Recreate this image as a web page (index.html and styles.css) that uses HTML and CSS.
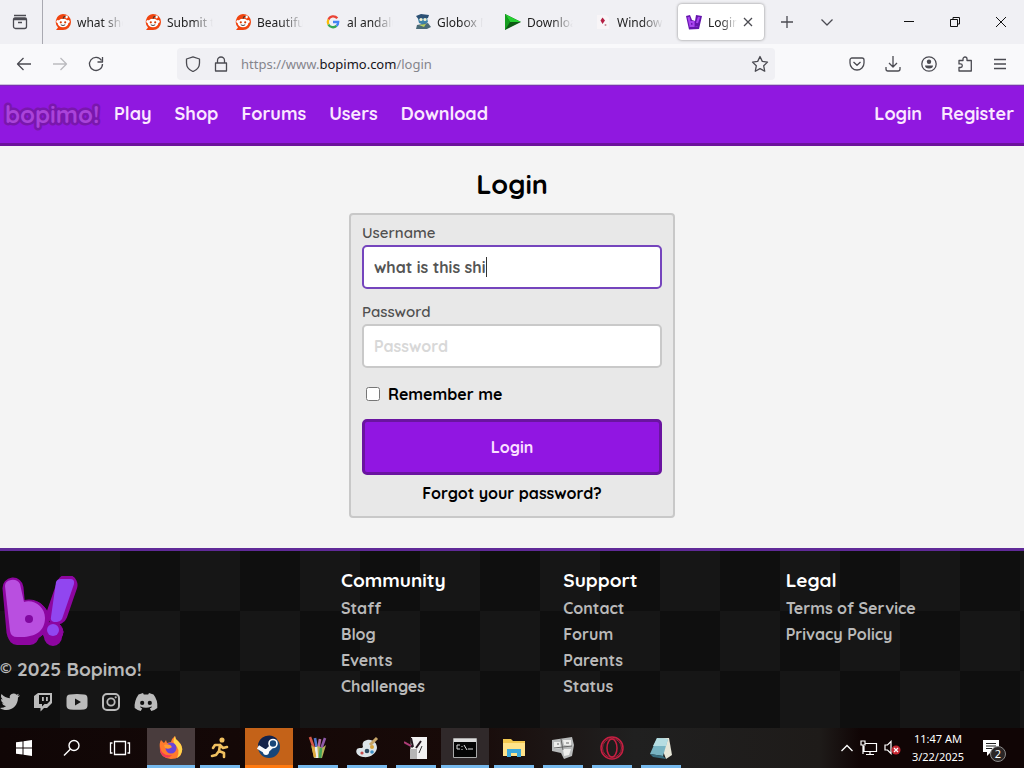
FILE: index.html
```html
<!DOCTYPE html>
<html lang="en">
<head>
<meta charset="utf-8">
<meta name="viewport" content="width=device-width, initial-scale=1">
<title>Login - Bopimo!</title>
<link rel="stylesheet" href="styles.css">
</head>
<body>
<svg class="defs" width="0" height="0" aria-hidden="true">
  <symbol id="reddit" viewBox="0 0 16 16">
    <path d="M8 0a8 8 0 1 1 0 16H1l2-2.500A8 8 0 0 1 8 0z" fill="#f0440f"/>
    <circle cx="11.500" cy="3" r="1.400" fill="#fff"/><circle cx="2.800" cy="7.500" r="1.500" fill="#fff"/><circle cx="13.200" cy="7.500" r="1.500" fill="#fff"/>
    <ellipse cx="8" cy="9" rx="5.400" ry="4.200" fill="#fff"/>
    <circle cx="5.800" cy="8.300" r="1.100" fill="#d93a00"/><circle cx="10.200" cy="8.300" r="1.100" fill="#d93a00"/>
    <path d="M5.800 10.800q2.200 1.500 4.400 0M8 5l.8-2.500 2 .4" fill="none" stroke="#333" stroke-width=".9"/>
  </symbol>
</svg>

<header class="browser">
  <div class="tabstrip">
    <button class="icon-btn view-btn" aria-label="Firefox View"><svg width="18" height="18" viewBox="0 0 18 18"><path d="M3 2.500h12M2.500 6.500h13v7a2 2 0 0 1-2 2h-9a2 2 0 0 1-2-2zM2.500 6.500q0-1.500 1.500-1.500h10q1.500 0 1.500 1.500M7 9.500h4"/></svg></button>
    <div class="tabs">
      <button class="tab"><svg width="16" height="16"><use href="#reddit"/></svg><span>what should</span></button>
      <button class="tab"><svg width="16" height="16"><use href="#reddit"/></svg><span>Submit to r</span></button>
      <button class="tab"><svg width="16" height="16"><use href="#reddit"/></svg><span>Beautiful l</span></button>
      <button class="tab"><svg width="16" height="16" viewBox="0 0 16 16" fill="none" stroke-width="2.300"><path d="M12.300 4.300A5.200 5.200 0 0 0 3.400 5.600" stroke="#ea4335"/><path d="M3.400 5.600a5.200 5.200 0 0 0 0 4.800" stroke="#fbbc05"/><path d="M3.400 10.400a5.200 5.200 0 0 0 8.100 1.500" stroke="#34a853"/><path d="M11.500 11.900A5 5 0 0 0 13.200 8H8" stroke="#4285f4"/></svg><span>al andalus</span></button>
      <button class="tab"><svg width="16" height="16" viewBox="0 0 16 16"><path d="M1 2l5-2 8 1-1 3-9 2z" fill="#2c5074"/><path d="M3 5l9-1 1 4-4 3-5-2z" fill="#3c83aa"/><circle cx="6" cy="5.500" r="1.600" fill="#f4f1cf"/><circle cx="10" cy="5.500" r="1.600" fill="#f4f1cf"/><path d="M2 11l11-2 3 4-4 2H1z" fill="#4a6a78"/><path d="M4 11l7-1-2 3z" fill="#b7cf60"/></svg><span>Globox Mo</span></button>
      <button class="tab"><svg width="16" height="16" viewBox="0 0 16 16"><path d="M0 0l16 8L0 16z" fill="#0d5a14"/><path d="M0 0l16 8L5 8z" fill="#25cf30"/><path d="M0 0v16l5-8z" fill="#169e20"/></svg><span>Download</span></button>
      <button class="tab"><svg width="16" height="16" viewBox="0 0 16 16"><path d="M2 1h9l3 3v11H2z" fill="#f8f5f7"/><path d="M7.500 3.500l2.500 3-2.500 3.500-2-3.500z" fill="#b51f43"/><circle cx="10.500" cy="11" r="1" fill="#c78998"/></svg><span>Windows 7</span></button>
      <div class="tab active"><svg width="16" height="16" viewBox="0 0 16 16"><path d="M0 2l4-1 2 5 3 1 1-6 6 1-3 13-10 .5z" fill="#6415ac"/><path d="M2.500 3l2 9h3V8h-3M13 3l-2 6M10.500 12v.5" fill="none" stroke="#a944f0" stroke-width="2.200"/></svg><span>Login - B</span><button class="close" aria-label="Close tab"><svg width="10" height="10" viewBox="0 0 10 10"><path d="M1 1l8 8M9 1L1 9"/></svg></button></div>
    </div>
    <button class="icon-btn new-tab" aria-label="New tab"><svg width="14" height="14" viewBox="0 0 14 14"><path d="M7 1v12M1 7h12"/></svg></button>
    <button class="icon-btn list-tabs" aria-label="List all tabs"><svg width="14" height="14" viewBox="0 0 14 14"><path d="M1.500 4.500L7 10l5.500-5.500"/></svg></button>
    <div class="window-controls">
      <button class="icon-btn" aria-label="Minimize"><svg width="12" height="12" viewBox="0 0 12 12"><path d="M1 5.500h10"/></svg></button>
      <button class="icon-btn" aria-label="Restore"><svg width="12" height="12" viewBox="0 0 12 12"><path d="M1.500 3.500h7v7h-7zM4 3.500v-2h6.500V8h-2"/></svg></button>
      <button class="icon-btn" aria-label="Close"><svg width="12" height="12" viewBox="0 0 12 12"><path d="M1 1l10 10M11 1L1 11"/></svg></button>
    </div>
  </div>
  <div class="toolbar">
    <div class="nav-buttons">
      <button class="icon-btn" aria-label="Back"><svg width="16" height="16" viewBox="0 0 16 16"><path d="M15 8H1.500M7.500 2l-6 6 6 6"/></svg></button>
      <button class="icon-btn faded" aria-label="Forward"><svg width="16" height="16" viewBox="0 0 16 16"><path d="M1 8h13.500M8.500 2l6 6-6 6"/></svg></button>
      <button class="icon-btn" aria-label="Reload"><svg width="16" height="16" viewBox="0 0 16 16"><path d="M13.500 4.500A6.500 6.500 0 1 0 14.500 8M14.500 1v5h-5"/></svg></button>
    </div>
    <div class="urlbar">
      <button class="icon-btn" aria-label="Tracking protection"><svg width="16" height="16" viewBox="0 0 16 16"><path d="M8 .8L14.500 3v4c0 4-2.500 7-6.500 8.500C4 14 1.500 11 1.500 7V3z"/></svg></button>
      <button class="icon-btn" aria-label="Site security"><svg width="16" height="16" viewBox="0 0 16 16"><path d="M2.500 7h11v8h-11zM4.500 7V4.500a3.500 3.500 0 0 1 7 0V7"/></svg></button>
      <div class="url">https://www.<b>bopimo.com</b>/login</div>
      <button class="icon-btn" aria-label="Bookmark"><svg width="18" height="18" viewBox="0 0 18 18"><path d="M9 1.500l2.300 4.900 5.200.7-3.800 3.700 1 5.400L9 13.600l-4.700 2.600 1-5.400L1.500 7.100l5.200-.7z"/></svg></button>
    </div>
    <div class="actions">
      <button class="icon-btn" aria-label="Pocket"><svg width="16" height="16" viewBox="0 0 16 16"><path d="M3 2h10a2 2 0 0 1 2 2v3a7 7 0 0 1-14 0V4a2 2 0 0 1 2-2zM4.500 6L8 9.300 11.500 6"/></svg></button>
      <button class="icon-btn" aria-label="Downloads"><svg width="16" height="16" viewBox="0 0 16 16"><path d="M8 0v10.500M4 7l4 4 4-4M1 11v2a2 2 0 0 0 2 2h10a2 2 0 0 0 2-2v-2"/></svg></button>
      <button class="icon-btn" aria-label="Account"><svg width="16" height="16" viewBox="0 0 16 16"><circle cx="8" cy="8" r="7.200"/><circle cx="8" cy="5.800" r="2.200" class="solid"/><path d="M4 9.500h8q0 3-4 3t-4-3z" class="solid"/></svg></button>
      <button class="icon-btn" aria-label="Extensions"><svg width="16" height="16" viewBox="0 0 16 16"><path d="M2 4.500h4V3a2 2 0 0 1 4 0v1.500h4.300V15H2v-3.500h1.500a1.800 1.800 0 0 0 0-3.600H2z"/></svg></button>
      <button class="icon-btn" aria-label="Menu"><svg width="14" height="14" viewBox="0 0 14 14"><path d="M1 2.500h12M1 7h12M1 11.500h12"/></svg></button>
    </div>
  </div>
</header>

<nav class="site-nav">
  <a class="wordmark" href="#">bopimo!</a>
  <div class="links"><a href="#">Play</a><a href="#">Shop</a><a href="#">Forums</a><a href="#">Users</a><a href="#">Download</a></div>
  <div class="account-links"><a href="#">Login</a><a href="#">Register</a></div>
</nav>

<main>
  <h1>Login</h1>
  <form class="card">
    <label for="username">Username</label>
    <input class="field typing" id="username" type="text" value="what is this shi">
    <label for="password">Password</label>
    <input class="field" id="password" type="password" placeholder="Password">
    <div class="remember"><input id="remember" type="checkbox"><label for="remember">Remember me</label></div>
    <button class="submit" type="button">Login</button>
    <a class="forgot" href="#">Forgot your password?</a>
  </form>
</main>

<footer class="site-footer">
  <div class="brand">
    <svg class="mark" width="76" height="72" viewBox="0 0 76 72" fill="none" stroke-linecap="round" stroke-linejoin="round">
      <g stroke="#8d06a0" fill="#8d06a0">
        <path d="M11 12l4 44h12M65 9L55 38" stroke-width="21"/>
        <circle cx="27" cy="44" r="20"/><circle cx="51" cy="56" r="10"/><path d="M15 60h13M51 60v1" stroke-width="18"/>
      </g>
      <path d="M54 6q1-3 5-3h9q5 0 4 5L60 43q-2 3-5 3h-3q-4-1-3-5z" fill="#9146f0"/>
      <path d="M3 10q0-5 6-6t9 4l4 18c10-3 21 5 21 16 0 13-10 19-23 19h-5q-6 0-7-6z" fill="#b94fe0"/>
      <circle cx="27" cy="43" r="4" fill="#8108a0"/><circle cx="51" cy="54" r="6" fill="#9146f0"/>
    </svg>
    <p class="copyright"><span class="copy">©</span> 2025 Bopimo!</p>
    <div class="social">
      <a href="#" aria-label="Twitter"><svg width="20" height="18" viewBox="0 0 20 18"><path d="M20 2.500l-2 2C18 12 13 17 6.500 17 4 17 2 16.500 0 15q4 0 6-1.700-3-.3-4-3h2Q1 9.500 1 6l1.800.5Q0 4 1.500 1 5 5 9.800 5.200 9 1 13.500.5q2 0 3 1.200L19 .8l-1.500 2z"/></svg></a>
      <a href="#" aria-label="Twitch"><svg width="18" height="20" viewBox="0 0 18 20"><path fill-rule="evenodd" d="M4 1h14v10l-5 5h-3l-3.500 3.500V16H0V4zM5 3v9h3v2.500L10.500 12H13l3-3V3zM8 5h1.800v4H8zM12 5h1.800v4H12z"/></svg></a>
      <a href="#" aria-label="YouTube"><svg width="22" height="16" viewBox="0 0 22 16"><path fill-rule="evenodd" d="M4 .5q7-1 14 0 3.500.2 3.500 4v7q0 3.300-3.500 4-7 .7-14 0-3.500-.7-3.500-4v-7q0-3.800 3.500-4zM9 4.500v7l6-3.500z"/></svg></a>
      <a href="#" aria-label="Instagram"><svg width="18" height="18" viewBox="0 0 18 18"><path fill-rule="evenodd" d="M5 0h8a5 5 0 0 1 5 5v8a5 5 0 0 1-5 5H5a5 5 0 0 1-5-5V5a5 5 0 0 1 5-5zM5 2a3 3 0 0 0-3 3v8a3 3 0 0 0 3 3h8a3 3 0 0 0 3-3V5a3 3 0 0 0-3-3zM9 4.400a4.600 4.600 0 1 1 0 9.200 4.600 4.600 0 0 1 0-9.200zM9 6.200a2.800 2.800 0 1 0 0 5.600 2.800 2.800 0 0 0 0-5.600z"/><circle cx="13.700" cy="4.300" r="1.100"/></svg></a>
      <a href="#" aria-label="Discord"><svg width="24" height="18" viewBox="0 0 24 18"><path fill-rule="evenodd" d="M9 0L4.500 1.500Q0 8 .7 15q3 2.500 6 3l1.500-2.500L6 14l.5-.5q5.500 2.500 11 0l.5.500-2.200 1.500 1.500 2.500q3-.5 6-3Q24 7 19.500 1.500L15 0l-.8 1.500H9.800zM8.200 7.800a2.100 2.100 0 1 0 0 4.200 2.100 2.100 0 0 0 0-4.200zM15.800 7.800a2.100 2.100 0 1 0 0 4.200 2.100 2.100 0 0 0 0-4.200z"/></svg></a>
    </div>
  </div>
  <div class="columns">
    <section><h2>Community</h2><a href="#">Staff</a><a href="#">Blog</a><a href="#">Events</a><a href="#">Challenges</a></section>
    <section><h2>Support</h2><a href="#">Contact</a><a href="#">Forum</a><a href="#">Parents</a><a href="#">Status</a></section>
    <section><h2>Legal</h2><a href="#">Terms of Service</a><a href="#">Privacy Policy</a></section>
  </div>
</footer>

<div class="taskbar">
  <button class="task" aria-label="Start"><svg width="16" height="16" viewBox="0 0 16 16" fill="#fff"><path d="M0 2.300L6.500 1.400v6.100H0zM7.500 1.200L16 0v7.500H7.500zM0 8.500h6.500v6.100L0 13.700zM7.500 8.500H16V16l-8.500-1.200z"/></svg></button>
  <button class="task" aria-label="Search"><svg width="18" height="18" viewBox="0 0 18 18" fill="none" stroke="#fff" stroke-width="1.400"><circle cx="11" cy="6.500" r="5"/><path d="M7.500 10L1 16.500"/></svg></button>
  <button class="task" aria-label="Task view"><svg width="22" height="16" viewBox="0 0 22 16" fill="none" stroke="#fff" stroke-width="1.300"><path d="M5.500 1.500h11v13h-11zM3.500 3h-2v10h2M18.500 3h2v10h-2"/></svg></button>
  <div class="apps">
    <button class="task app lit" aria-label="Firefox"><svg width="24" height="24" viewBox="0 0 24 24"><path d="M2 4l3 3 2-3 1 3 4-1q1-4 4-6 0 3 3 5 5 5 4 10-1 8-11 8Q1 22 1 13 0 7 2 4z" fill="#ff7a2c"/><path d="M16 0q0 3 3 5 5 5 4 10-1 5-5 7 4-9-2-13-3-4 0-9z" fill="#ffd34b"/><path d="M1 11q2 10 12 8-4 5-9 1-4-4-3-9z" fill="#f23b55"/><circle cx="12" cy="12" r="5.500" fill="#6844d8"/><path d="M5 9q6-2 8 2-3 3-7 1z" fill="#ff9b31"/></svg></button>
    <button class="task app" aria-label="Messenger"><svg width="20" height="22" viewBox="0 0 20 22" fill="none" stroke="#f0c060" stroke-width="2.600" stroke-linecap="round" stroke-linejoin="round"><circle cx="12" cy="3" r="1.800" fill="#f0c060" stroke-width="1.500"/><path d="M10 8L5 8 3 11M10 8l3 3 4-1M10 8l-1 6 5 2v4M9 14l-3 4-4 1"/></svg></button>
    <button class="task app steam" aria-label="Steam"><svg width="24" height="24" viewBox="0 0 24 24"><circle cx="12" cy="12" r="11" fill="#174679"/><path d="M1 11A11 11 0 0 1 20 4L9 14z" fill="#12224a"/><path d="M1 12l8 5 6-6" fill="none" stroke="#f4f6fa" stroke-width="4"/><circle cx="16" cy="8.500" r="4" fill="#174679" stroke="#fff" stroke-width="1.600"/><circle cx="9" cy="17" r="3" fill="#fff"/></svg></button>
    <button class="task app" aria-label="Art tools"><svg width="22" height="24" viewBox="0 0 22 24" fill="none" stroke-width="2.600"><path d="M3 1l5 14" stroke="#d65748"/><path d="M8 2l2 12" stroke="#5078cc"/><path d="M13 3l-2 12" stroke="#b76ba4"/><path d="M18 2l-5 14" stroke="#8d5aa8"/><path d="M4 9l3 13h8l4-13-4 3-4-2-3 2z" fill="#b9b45a"/><path d="M9 11l1 11" stroke="#eee"/><path d="M14 12l-1 10" stroke="#45a45b"/><path d="M6 11l2 10" stroke="#e0a93c"/></svg></button>
    <button class="task app" aria-label="Paint"><svg width="24" height="24" viewBox="0 0 24 24"><path d="M12 4c6-1 10 3 10 8-1 6-7 10-14 9-6-1-8-5-6-8 2-2 5 0 6-2-1-4 0-6 4-7z" fill="#dce4e8"/><circle cx="12" cy="15" r="2.300" fill="#2a465c"/><circle cx="17" cy="11" r="2" fill="#d9a53b"/><circle cx="17" cy="16" r="1.800" fill="#3e8ec4"/><circle cx="7" cy="17" r="1.600" fill="#c64c4c"/><path d="M15 9l7-7" stroke="#c7a66a" stroke-width="3"/></svg></button>
    <button class="task app" aria-label="Drawing"><svg width="24" height="24" viewBox="0 0 24 24"><path d="M7 1h16v22H6z" fill="#f2f2f2"/><path d="M6 13h7v10H6z" fill="#b6b6b6"/><path d="M1 7l8 4M7 2l2 9M12 12l5-7" stroke="#261b22" stroke-width="2"/><path d="M0 6l7 4" stroke="#b03c76" stroke-width="2"/><path d="M15 17l3-7" stroke="#333"/></svg></button>
    <button class="task app console" aria-label="Command prompt"><svg width="24" height="20" viewBox="0 0 24 20"><path d="M.5.5h23v19H.5z" fill="#050505" stroke="#aaa"/><path d="M1 1h22v3H1z" fill="#ddd"/><path d="M7 7H4v4h3M9 8v1M9 11v1M11 7l3 5M15 11h5" fill="none" stroke="#ddd"/></svg></button>
    <button class="task app" aria-label="File Explorer"><svg width="24" height="20" viewBox="0 0 24 20"><path d="M1 1h8l2 2h12v15H1z" fill="#f3c84f"/><path d="M1 5h22v13H1z" fill="#ffe38a"/><path d="M5 19v-8h14v8h-4v-4H9v4z" fill="#3ca9dc"/></svg></button>
    <button class="task app" aria-label="Game"><svg width="24" height="24" viewBox="0 0 24 24"><path d="M1 4l20-3 2 8-2 11-8 3-3-6-9-2z" fill="#b9bbbb"/><path d="M3 6l6 0 1 6-7 1zM12 4l8 0v6l-7-1zM12 13l8 0-2 6-5 1z" fill="#eeeeec"/><path d="M3 12l18-2M10 3l2 11M6 8h2M15 7h3" fill="none" stroke="#666"/></svg></button>
    <button class="task app" aria-label="Opera"><svg width="24" height="24" viewBox="0 0 24 24" fill="none" stroke="#c71f42" stroke-width="1.500"><circle cx="12" cy="12" r="11"/><circle cx="12" cy="12" r="9.500" stroke-width=".8"/><ellipse cx="12" cy="12" rx="5" ry="9"/></svg></button>
    <button class="task app" aria-label="Notepad"><svg width="24" height="24" viewBox="0 0 24 24"><path d="M9 2h11l3 17-6 4z" fill="#e6e6d8"/><path d="M8 2l11 1-5 17L1 18z" fill="#78b4c3"/><path d="M8 2l11 1-2 7H4z" fill="#b5dde2"/><path d="M1 18l13 2 3 3-13-2z" fill="#386e80"/></svg></button>
  </div>
  <div class="tray">
    <svg width="14" height="10" viewBox="0 0 14 10" fill="none" stroke="#fff" stroke-width="1.300"><path d="M1.500 8L7 2.500 12.500 8"/></svg>
    <svg width="18" height="16" viewBox="0 0 18 16" fill="none" stroke="#fff" stroke-width="1.200"><path d="M5 3.500h11.500v8H4V6M10 11.500v3M6 14.500h8M1 1h4v4H1zM3 5v9"/></svg>
    <svg width="18" height="16" viewBox="0 0 18 16" fill="none" stroke="#fff" stroke-width="1.200"><path d="M1 5h2.500L7 1.500v12L3.500 10H1z"/><circle cx="12" cy="10" r="4.500" fill="#c62732" stroke="none"/><path d="M10 8l4 4M14 8l-4 4"/></svg>
    <div class="clock"><span>11:47 AM</span><span>3/22/2025</span></div>
    <button class="notices" aria-label="Notifications"><svg width="18" height="18" viewBox="0 0 18 18"><path d="M1 1h16v12h-8l-4 4v-4H1z" fill="#fff"/><path d="M4 4.500h10M4 7h10M4 9.500h6" stroke="#222"/></svg><span class="count">2</span></button>
  </div>
</div>
</body>
</html>
```

FILE: styles.css
```css
* { box-sizing: border-box; }
body {
  margin: 0;
  min-height: 100vh;
  display: flex;
  flex-direction: column;
  background: #f4f4f4;
  font-family: Quicksand, Lato, "Open Sans", sans-serif;
  font-weight: 700;
  font-size: 16px;
}
button, input { font: inherit; }
button { border: 0; padding: 0; background: none; color: inherit; }
a { color: inherit; text-decoration: none; }
svg { display: block; flex: none; }
.defs { position: absolute; }

/* Browser window */
.browser {
  font-family: "Segoe UI", "Noto Sans", sans-serif;
  font-weight: 400;
  background: #f0f0f4;
  border-bottom: 1px solid #ccc0dc;
}
.icon-btn {
  display: flex;
  align-items: center;
  justify-content: center;
  flex: none;
}
.icon-btn svg, .close svg {
  fill: none;
  stroke: #4b4b52;
  stroke-width: 1.3px;
  stroke-linejoin: round;
}
.icon-btn svg .solid { fill: #4b4b52; stroke: none; }
.faded { opacity: .35; }
.tabstrip { display: flex; height: 44px; align-items: center; }
.view-btn { width: 43px; height: 44px; padding-right: 3px; border-right: 1px solid #a9a9b1; }
.tabs { display: flex; flex: 0 1 724px; min-width: 0; padding-left: 2px; }
.tab {
  display: flex;
  align-items: center;
  gap: 6px;
  flex: 0 1 90px;
  min-width: 0;
  height: 36px;
  padding-left: 10px;
  font-size: 12px;
  color: #222;
  text-align: left;
}
.tab span {
  flex: 1;
  min-width: 0;
  margin-right: 8px;
  overflow: hidden;
  white-space: nowrap;
  mask-image: linear-gradient(90deg, #000 50%, transparent 92%);
}
.tab.active {
  flex-basis: 86px;
  margin-left: 3px;
  padding-left: 8px;
  background: #fff;
  border-radius: 4px;
  box-shadow: 0 0 3px #888;
}
.active span { margin-right: 0; mask-image: linear-gradient(90deg, #000 45%, transparent 100%); }
.close { margin-right: 11px; }
.new-tab { width: 40px; height: 40px; }
.list-tabs { width: 40px; height: 40px; }
.window-controls { display: flex; margin-left: auto; }
.window-controls .icon-btn { width: 46px; height: 40px; }
.window-controls svg { stroke: #111; stroke-width: 1px; }
.toolbar { display: flex; align-items: center; height: 40px; background: #f9f9fb; }
.nav-buttons { display: flex; gap: 20px; padding-left: 16px; flex: 0 0 177px; }
.urlbar {
  flex: 1;
  display: flex;
  align-items: center;
  gap: 12px;
  height: 32px;
  padding: 0 6px 0 8px;
  background: #f0f0f4;
  border-radius: 4px;
}
.url { flex: 1; font-size: 13px; color: #85858c; }
.url b { font-weight: 400; color: #15141a; }
.actions { display: flex; gap: 20px; padding: 0 17px 0 74px; }

/* Site header */
.site-nav {
  display: flex;
  align-items: center;
  height: 61px;
  padding: 0 10px 2px 5px;
  background: #9018e0;
  border-top: 1px solid #7b2fb5;
  border-bottom: 3px solid #6c129c;
  color: #fbe8ff;
  font-size: 18px;
}
.wordmark {
  flex: 0 0 109px;
  font-size: 24px;
  line-height: 32px;
  color: #aa43da;
  -webkit-text-stroke: 5px #7917ad;
  paint-order: stroke fill;
}
.links { display: flex; gap: 23px; }
.account-links { display: flex; gap: 19px; margin-left: auto; }

/* Login form */
main { flex: 1; display: flex; flex-direction: column; align-items: center; padding: 20px 16px; }
h1 { margin: 0 0 11px; font-size: 27px; line-height: 36px; }
.card {
  display: flex;
  flex-direction: column;
  width: 100%;
  max-width: 326px;
  padding: 8px 11px 10px;
  border: 2px solid #c8c8c8;
  border-radius: 4px;
  background: #e8e8e8;
}
.card > label { padding-bottom: 2px; font-size: 15px; font-weight: 600; line-height: 20px; color: #505050; }
.field {
  width: 100%;
  height: 44px;
  margin-bottom: 13px;
  padding: 0 10px;
  border: 2px solid #c9c9c9;
  border-radius: 5px;
  background: #fff;
  color: #555;
  outline: 0;
}
.field.typing {
  border-color: #7545bd;
  background: linear-gradient(#333, #333) 122px 50% / 1px 20px no-repeat #fff;
}
.field::placeholder { color: #d8d8d8; opacity: 1; }
.remember { display: flex; align-items: center; gap: 8px; line-height: 26px; }
.remember input { width: 14px; height: 14px; margin: 0 0 0 4px; }
.submit {
  height: 56px;
  margin-top: 12px;
  border: 3px solid #6a14a0;
  border-radius: 5px;
  background: #9116e2;
  color: #fbe0ff;
}
.forgot { margin-top: 5px; line-height: 26px; text-align: center; }

/* Site footer */
.site-footer {
  display: flex;
  height: 180px;
  padding-top: 19px;
  border-top: 3px solid #602a98;
  background: repeating-conic-gradient(#161616 0 25%, #0f0f0f 0 50%) 0 0 / 120px 120px padding-box;
  color: #b9b9b9;
}
.brand { flex: 0 0 33.3%; padding-top: 6px; }
.mark { margin-left: 2px; }
.copyright { margin: 7px 0 10px; font-size: 19px; line-height: 26px; }
.copy { font-size: 15px; vertical-align: 3px; }
.social { display: flex; align-items: center; gap: 14px; height: 20px; }
.social svg { fill: #bbb; }
.columns { flex: 1; display: grid; grid-template-columns: repeat(3, 1fr); padding-right: 16px; }
.columns section { display: flex; flex-direction: column; line-height: 26px; }
.columns h2 { margin: 0; padding-bottom: 4px; font-size: 19px; line-height: 21px; color: #fff; }

/* Taskbar */
.taskbar {
  display: flex;
  height: 40px;
  background: linear-gradient(90deg, #100606, #180a08 45%, #202020 62%, #1e1b19 80%, #100505 84%);
  color: #fff;
  font-family: "Segoe UI", "Noto Sans", sans-serif;
  font-weight: 400;
}
.task { display: flex; align-items: center; justify-content: center; width: 48px; height: 40px; }
.apps { display: flex; gap: 1px; margin-left: 3px; }
.app {
  background: linear-gradient(#76b9ed, #76b9ed) 50% 100% / 40px 3px no-repeat;
}
.app.lit { background-color: #493c3d; background-size: 48px 3px; }
.app.steam { background: #c46218; border-bottom: 3px solid #ff7a10; }
.app.console { background-color: #30292a; background-size: 48px 3px; }
.tray { display: flex; align-items: center; gap: 6px; margin-left: auto; padding-right: 18px; }
.clock { display: flex; flex-direction: column; align-items: center; width: 60px; font-size: 11px; line-height: 18px; white-space: nowrap; }
.notices { position: relative; width: 24px; height: 28px; margin-left: 8px; display: flex; align-items: center; }
.count {
  position: absolute;
  right: 0;
  bottom: 0;
  width: 16px;
  border: 1px solid #888;
  border-radius: 50%;
  background: #2b2626;
  font-size: 11px;
  line-height: 14px;
}
```
